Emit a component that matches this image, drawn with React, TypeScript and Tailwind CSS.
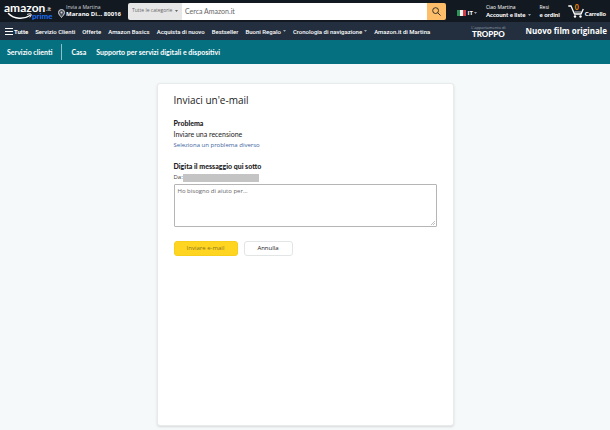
import { useState } from "react"

const navLinks = [
    { label: "Servizio Clienti" },
    { label: "Offerte" },
    { label: "Amazon Basics" },
    { label: "Acquista di nuovo" },
    { label: "Bestseller" },
    { label: "Buoni Regalo", menu: true },
    { label: "Cronologia di navigazione", menu: true },
    { label: "Amazon.it di Martina" },
]

function Caret({ className = "" }: { className?: string }) {
    return (
        <svg viewBox="0 0 6 4" className={`w-[3px] h-[2px] shrink-0 ${className}`} fill="currentColor" aria-hidden="true">
            <path d="M0 0h6L3 4z" />
        </svg>
    )
}

function Logo() {
    return (
        <a href="#" aria-label="Amazon.it Prime" className="block w-[50px] h-[22px] shrink-0">
            <svg viewBox="0 0 50 22" className="w-full h-full overflow-visible" aria-hidden="true">
                <text x="0" y="12" fontSize="12" fontWeight="700" fill="#fff" fontFamily="Lato, sans-serif">amazon</text>
                <text x="42" y="11" fontSize="6" fill="#fff" fontFamily="Lato, sans-serif">.it</text>
                <path d="M4.500 13.500C10 19.500 20 19.500 26 15.500" fill="none" stroke="#fff" strokeWidth="1.500" strokeLinecap="round" />
                <path d="M23.500 14.300c1.500-.5 3-.6 3.600-.1.300.7-.3 2-1 2.900" fill="none" stroke="#fff" strokeWidth="1" strokeLinecap="round" />
                <text x="28" y="19" fontSize="8" fontWeight="700" fill="#1c6ef0" fontFamily="Lato, sans-serif">prime</text>
            </svg>
        </a>
    )
}

function TopBar() {
    return (
        <header className="flex items-center h-[22px] px-1 bg-[#131921] text-white">
            <Logo />
            <a href="#" className="flex items-center gap-px ml-1 shrink-0">
                <svg viewBox="0 0 14 18" className="w-[7px] h-[9px] mt-1" aria-hidden="true">
                    <path d="M7 1a6 6 0 0 0-6 6c0 4 4 7 6 10 2-3 6-6 6-10a6 6 0 0 0-6-6z" fill="#4a5058" stroke="#d5d7d9" strokeWidth="2" />
                    <circle cx="7" cy="7" r="2" fill="#d5d7d9" />
                </svg>
                <span className="whitespace-nowrap">
                    <span className="block text-[5px] leading-[7px] text-gray-300">Invia a Martina</span>
                    <span className="block text-[6px] leading-[7px] font-bold">Marano Di... 80016</span>
                </span>
            </a>

            <form className="flex flex-1 min-w-0 h-[17px] ml-[7px] rounded-[2px] overflow-hidden" onSubmit={(e) => e.preventDefault()}>
                <div className="relative flex items-center bg-[#e6e6e6] text-[#666]">
                    <select aria-label="Categoria" className="appearance-none w-[54px] h-full pl-1 text-[5px] bg-transparent outline-none">
                        <option>Tutte le categorie</option>
                    </select>
                    <Caret className="absolute right-[4px] pointer-events-none" />
                </div>
                <input
                    type="text"
                    aria-label="Cerca"
                    placeholder="Cerca Amazon.it"
                    className="flex-1 min-w-0 px-[3px] bg-white text-[7px] text-gray-900 placeholder:text-[#666] outline-none font-['Lato']"
                />
                <button type="submit" aria-label="Cerca" className="flex items-center justify-center w-[19px] bg-[#febd69] text-[#222]">
                    <svg viewBox="0 0 20 20" className="w-[9px] h-[9px]" fill="none" stroke="currentColor" strokeWidth="2" aria-hidden="true">
                        <circle cx="8" cy="8" r="6.500" />
                        <path d="M12.500 12.500l6.500 6.500" />
                    </svg>
                </button>
            </form>

            <button type="button" className="flex items-center ml-[11px] mt-1 text-[6px] leading-[8px] font-bold">
                <svg viewBox="0 0 9 6" className="w-[9px] h-[6px] mr-px" aria-hidden="true">
                    <path d="M0 0h3v6H0z" fill="#2f9258" />
                    <path d="M3 0h3v6H3z" fill="#f4f4f4" />
                    <path d="M6 0h3v6H6z" fill="#d43b42" />
                </svg>
                IT
                <Caret className="ml-px text-gray-400" />
            </button>
            <a href="#" className="ml-[9px] whitespace-nowrap">
                <span className="block text-[5px] leading-[7px]">Ciao Martina</span>
                <span className="flex items-center gap-[2px] text-[6px] leading-[7px] font-black font-['Lato']">
                    Account e liste <Caret className="text-gray-400" />
                </span>
            </a>
            <a href="#" className="ml-[9px] whitespace-nowrap">
                <span className="block text-[5px] leading-[7px]">Resi</span>
                <span className="block text-[6px] leading-[7px] font-black font-['Lato']">e ordini</span>
            </a>
            <a href="#" className="flex items-end ml-2 text-[6px] leading-[8px] font-black font-['Lato']">
                <span className="relative block">
                    <svg viewBox="0 0 17 14" className="w-[17px] h-[14px]" fill="none" stroke="#fff" strokeWidth="1.300" aria-hidden="true">
                        <path d="M.3 2h2.700l3.500 8h6.500l2.300-5" />
                        <path d="M6.500 8h7" strokeWidth=".8" />
                        <circle cx="7" cy="12.500" r="1.200" fill="#fff" stroke="none" />
                        <circle cx="12.500" cy="12.500" r="1.200" fill="#fff" stroke="none" />
                    </svg>
                    <span className="absolute left-[7px] top-0 text-[7px] leading-[7px] text-[#f08804]">0</span>
                </span>
                Carrello
            </a>
        </header>
    )
}

function MainNav() {
    return (
        <nav className="flex items-center h-[18px] pl-[5px] pr-[3px] bg-[#232f3e] text-white text-[6px] whitespace-nowrap">
            <button type="button" className="flex items-center gap-px font-bold font-['Roboto']">
                <svg viewBox="0 0 8 8" className="w-[8px] h-[8px]" stroke="currentColor" strokeWidth="1" aria-hidden="true">
                    <path d="M0 1.500h8M0 4.500h8M0 7.500h8" />
                </svg>
                Tutte
            </button>
            <ul className="flex items-center gap-[7px] ml-[7px] font-medium font-['Roboto']">
                {navLinks.map((link) => (
                    <li key={link.label}>
                        <a href="#" className="flex items-center gap-[2px]">
                            {link.label}
                            {link.menu && <Caret className="text-gray-400" />}
                        </a>
                    </li>
                ))}
            </ul>
            <a href="#" className="flex items-center gap-5 ml-auto font-bold">
                <span className="text-center">
                    <span className="block text-[4px] leading-[5px] font-normal text-gray-400">L'appartamento di</span>
                    <span className="block text-[8px] leading-[8px] font-black font-['Lato']">TROPPO</span>
                </span>
                <span className="text-[8px]">Nuovo film originale</span>
            </a>
        </nav>
    )
}

function ServiceNav() {
    return (
        <nav className="flex items-center h-[24px] px-[7px] bg-[#05707f] text-white text-[7px] font-bold whitespace-nowrap font-['Lato']">
            <a href="#">Servizio clienti</a>
            <span className="w-px h-4 mx-[9px] bg-[#8fc0c7]" />
            <a href="#">Casa</a>
            <a href="#" className="ml-[10px]">Supporto per servizi digitali e dispositivi</a>
        </nav>
    )
}

export default function App() {
    const [message, setMessage] = useState("")

    return (
        <div className="min-h-screen bg-[#f6f9f9] text-[#222] font-['Open_Sans','Noto_Sans',sans-serif]">
            <TopBar />
            <MainNav />
            <ServiceNav />
            <main className="px-4 pt-[19px] pb-1">
                <form
                    className="max-w-[297px] min-h-[343px] mx-auto px-4 pt-[9px] pb-4 bg-white border border-[#e8ebeb] rounded-[3px] shadow-sm"
                    onSubmit={(e) => e.preventDefault()}
                >
                    <h1 className="text-[10px] leading-[14px]">Inviaci un'e-mail</h1>
                    <h2 className="mt-[11px] text-[7px] leading-[10px] font-black font-['Lato']">Problema</h2>
                    <p className="text-[7px] leading-[12px] font-['Lato']">Inviare una recensione</p>
                    <a href="#" className="block text-[6px] leading-[10px] text-[#3c66a0]">Seleziona un problema diverso</a>

                    <label htmlFor="message" className="block mt-[11px] text-[7px] leading-[10px] font-black font-['Lato']">
                        Digita il messaggio qui sotto
                    </label>
                    <div className="flex items-center mt-px text-[6px] leading-[11px] text-[#444]">
                        Da:
                        <span className="w-[76px] h-[8px] bg-[#c4c4c4]" />
                    </div>
                    <div className="relative mt-px">
                        <textarea
                            id="message"
                            value={message}
                            onChange={(e) => setMessage(e.target.value)}
                            placeholder="Ho bisogno di aiuto per..."
                            className="block w-full h-[43px] px-[3px] py-[2px] border border-[#b5b5b5] rounded-[1px] text-[6px] leading-[8px] placeholder:text-[#666] outline-none resize-none"
                        />
                        <svg viewBox="0 0 4 4" className="absolute right-[2px] bottom-[2px] w-[4px] h-[4px]" stroke="#999" strokeWidth=".6" aria-hidden="true">
                            <path d="M0 4l4-4M2 4l2-2" />
                        </svg>
                    </div>
                    <div className="flex gap-[6px] mt-[14px]">
                        <button type="submit" className="w-[64px] h-[15px] rounded-[3px] bg-[#ffd521] border border-[#f5cf1c] text-[6px] text-[#8a7620]">
                            Inviare e-mail
                        </button>
                        <button type="button" onClick={() => setMessage("")} className="w-[49px] h-[15px] rounded-[3px] bg-white border border-[#e2e5e5] text-[6px]">
                            Annulla
                        </button>
                    </div>
                </form>
            </main>
        </div>
    )
}
